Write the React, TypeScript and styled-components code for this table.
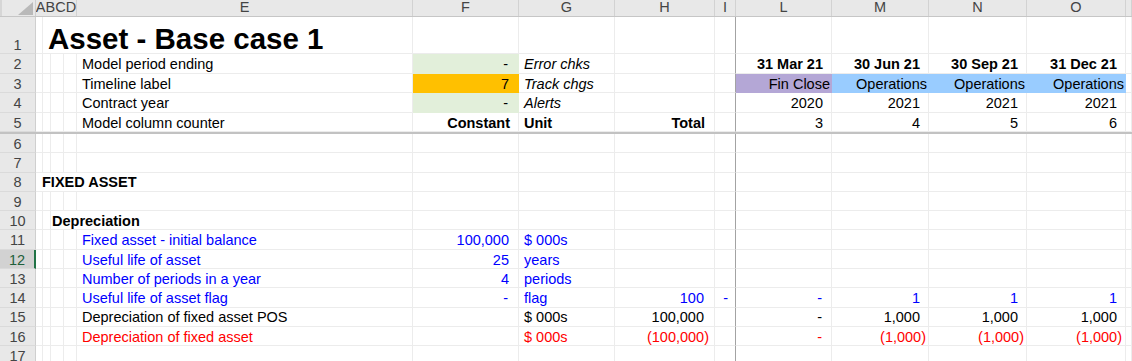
import React from 'react';
import styled, { createGlobalStyle } from 'styled-components';

type ColKey = 'A' | 'B' | 'C' | 'D' | 'E' | 'F' | 'G' | 'H' | 'I' | 'L' | 'M' | 'N' | 'O' | 'P';
type Tone = 'black' | 'blue' | 'red';
type Kind = 'text' | 'label' | 'num' | 'neg' | 'dash' | 'fill' | 'title';

interface CellSpec {
  col: ColKey;
  text: string;
  span?: number;
  kind?: Kind;
  tone?: Tone;
  bold?: boolean;
  italic?: boolean;
  fill?: string;
  pl?: number;
  pr?: number;
}

interface RowSpec {
  n: number;
  h: number;
  cells: CellSpec[];
}

const COLUMNS: { key: ColKey; w: string }[] = [
  { key: 'A', w: '7px' },
  { key: 'B', w: '8px' },
  { key: 'C', w: '13px' },
  { key: 'D', w: '13px' },
  { key: 'E', w: '336px' },
  { key: 'F', w: '106px' },
  { key: 'G', w: '96px' },
  { key: 'H', w: '100px' },
  { key: 'I', w: '21px' },
  { key: 'L', w: '96px' },
  { key: 'M', w: '97px' },
  { key: 'N', w: '98px' },
  { key: 'O', w: '99px' },
  { key: 'P', w: '1fr' },
];

const TEMPLATE = `36px ${COLUMNS.map((c) => c.w).join(' ')}`;

const TONES: Record<Tone, string> = {
  black: '#000000',
  blue: '#0000ff',
  red: '#ff0000',
};

const GREEN = '#e2efda';
const ORANGE = '#ffc000';
const PURPLE = '#b4a7d6';
const SKY = '#99ccff';

const GRID = '#ececec';
const HEAD_BG = '#e8e8e8';

const GlobalStyle = createGlobalStyle`
  html, body {
    margin: 0;
    padding: 0;
    background: #ffffff;
  }
  body {
    font-family: Arial, 'Liberation Sans', sans-serif;
    overflow: hidden;
  }
  * {
    box-sizing: border-box;
  }
`;

const Sheet = styled.div`
  width: 1132px;
  height: 361px;
  overflow: hidden;
  background: #ffffff;
  font-size: 14.5px;
`;

const Row = styled.div<{ $h: number }>`
  display: grid;
  grid-template-columns: ${TEMPLATE};
  height: ${(p) => p.$h}px;
`;

const HeaderRow = styled(Row)`
  border-bottom: 1px solid #c6c6c6;
`;

const Corner = styled.div`
  position: relative;
  background: ${HEAD_BG};
  border-right: 1px solid #cfcfcf;
  border-left: 2px solid #d6d6d6;

  > svg {
    position: absolute;
    right: 2px;
    bottom: 1px;
  }
`;

const ColHead = styled.div<{ $span?: number }>`
  grid-column: span ${(p) => p.$span ?? 1};
  display: flex;
  align-items: flex-end;
  justify-content: center;
  padding-bottom: 2px;
  background: ${HEAD_BG};
  border-right: 1px solid #d2d2d2;
  color: #444444;
  line-height: 1;
  white-space: nowrap;
  overflow: hidden;
`;

const RowHead = styled.div<{ $selected?: boolean }>`
  display: flex;
  align-items: flex-end;
  justify-content: center;
  padding-bottom: 1px;
  background: ${(p) => (p.$selected ? '#d2d2d2' : HEAD_BG)};
  color: ${(p) => (p.$selected ? '#1f5f3a' : '#444444')};
  border-right: ${(p) => (p.$selected ? '2px solid #217346' : '1px solid #cfcfcf')};
  border-bottom: 1px solid #dadada;
  line-height: 1;
`;

const Cell = styled.div<{
  $span: number;
  $right: boolean;
  $pl: number;
  $pr: number;
  $tone: Tone;
  $bold?: boolean;
  $italic?: boolean;
  $fill?: string;
  $freeze?: boolean;
  $title?: boolean;
}>`
  grid-column: span ${(p) => p.$span};
  display: flex;
  align-items: flex-end;
  justify-content: ${(p) => (p.$right ? 'flex-end' : 'flex-start')};
  padding: 0 ${(p) => p.$pr}px ${(p) => (p.$title ? 0 : 1)}px ${(p) => p.$pl}px;
  min-width: 0;
  white-space: nowrap;
  line-height: 1;
  font-size: ${(p) => (p.$title ? '29.5px' : '14.5px')};
  font-weight: ${(p) => (p.$bold || p.$title ? 700 : 400)};
  font-style: ${(p) => (p.$italic ? 'italic' : 'normal')};
  color: ${(p) => TONES[p.$tone]};
  background: ${(p) => p.$fill ?? 'transparent'};
  border-right: 1px solid ${(p) => (p.$freeze ? '#a3a3a3' : p.$fill ?? GRID)};
  border-bottom: 1px solid ${(p) => p.$fill ?? GRID};
`;

const FreezeBar = styled.div`
  height: 2px;
  background: #c2c2c2;
`;

const RIGHT_PAD: Record<Kind, number> = {
  text: 2,
  label: 2,
  num: 9,
  neg: 3,
  dash: 10,
  fill: 2,
  title: 0,
};

const dates = ['31 Mar 21', '30 Jun 21', '30 Sep 21', '31 Dec 21'];
const timeline: ColKey[] = ['L', 'M', 'N', 'O'];

const TOP_ROWS: RowSpec[] = [
  {
    n: 1,
    h: 37,
    cells: [{ col: 'B', span: 4, text: 'Asset - Base case 1', kind: 'title', pl: 5 }],
  },
  {
    n: 2,
    h: 19.5,
    cells: [
      { col: 'E', text: 'Model period ending', kind: 'label' },
      { col: 'F', text: '-', kind: 'dash', fill: GREEN },
      { col: 'G', text: 'Error chks', kind: 'label', italic: true },
      ...timeline.map((col, i) => ({ col, text: dates[i], kind: 'num' as Kind, bold: true, pr: 8 })),
    ],
  },
  {
    n: 3,
    h: 19.5,
    cells: [
      { col: 'E', text: 'Timeline label', kind: 'label' },
      { col: 'F', text: '7', kind: 'num', fill: ORANGE },
      { col: 'G', text: 'Track chgs', kind: 'label', italic: true },
      { col: 'L', text: 'Fin Close', kind: 'fill', fill: PURPLE, pr: 1 },
      { col: 'M', text: 'Operations', kind: 'fill', fill: SKY, pr: 1 },
      { col: 'N', text: 'Operations', kind: 'fill', fill: SKY, pr: 1 },
      { col: 'O', text: 'Operations', kind: 'fill', fill: SKY, pr: 1 },
    ],
  },
  {
    n: 4,
    h: 19.5,
    cells: [
      { col: 'E', text: 'Contract year', kind: 'label' },
      { col: 'F', text: '-', kind: 'dash', fill: GREEN },
      { col: 'G', text: 'Alerts', kind: 'label', italic: true },
      { col: 'L', text: '2020', kind: 'num', pr: 8 },
      { col: 'M', text: '2021', kind: 'num', pr: 8 },
      { col: 'N', text: '2021', kind: 'num', pr: 8 },
      { col: 'O', text: '2021', kind: 'num', pr: 8 },
    ],
  },
  {
    n: 5,
    h: 19.5,
    cells: [
      { col: 'E', text: 'Model column counter', kind: 'label' },
      { col: 'F', text: 'Constant', kind: 'num', bold: true, pr: 8 },
      { col: 'G', text: 'Unit', kind: 'label', bold: true },
      { col: 'H', text: 'Total', kind: 'num', bold: true },
      { col: 'L', text: '3', kind: 'num', pr: 8 },
      { col: 'M', text: '4', kind: 'num', pr: 8 },
      { col: 'N', text: '5', kind: 'num', pr: 8 },
      { col: 'O', text: '6', kind: 'num', pr: 8 },
    ],
  },
];

const RH = 19.3;

const BODY_ROWS: RowSpec[] = [
  { n: 6, h: RH, cells: [] },
  { n: 7, h: RH, cells: [] },
  { n: 8, h: RH, cells: [{ col: 'A', span: 5, text: 'FIXED ASSET', kind: 'label', bold: true, pl: 6 }] },
  { n: 9, h: RH, cells: [] },
  { n: 10, h: RH, cells: [{ col: 'C', span: 3, text: 'Depreciation', kind: 'label', bold: true, pl: 1 }] },
  {
    n: 11,
    h: RH,
    cells: [
      { col: 'E', text: 'Fixed asset - initial balance', kind: 'label', tone: 'blue' },
      { col: 'F', text: '100,000', kind: 'num', tone: 'blue' },
      { col: 'G', text: '$ 000s', kind: 'label', tone: 'blue' },
    ],
  },
  {
    n: 12,
    h: RH,
    cells: [
      { col: 'E', text: 'Useful life of asset', kind: 'label', tone: 'blue' },
      { col: 'F', text: '25', kind: 'num', tone: 'blue' },
      { col: 'G', text: 'years', kind: 'label', tone: 'blue' },
    ],
  },
  {
    n: 13,
    h: RH,
    cells: [
      { col: 'E', text: 'Number of periods in a year', kind: 'label', tone: 'blue' },
      { col: 'F', text: '4', kind: 'num', tone: 'blue' },
      { col: 'G', text: 'periods', kind: 'label', tone: 'blue' },
    ],
  },
  {
    n: 14,
    h: RH,
    cells: [
      { col: 'E', text: 'Useful life of asset flag', kind: 'label', tone: 'blue' },
      { col: 'F', text: '-', kind: 'dash', tone: 'blue' },
      { col: 'G', text: 'flag', kind: 'label', tone: 'blue' },
      { col: 'H', text: '100', kind: 'num', tone: 'blue', pr: 10 },
      { col: 'I', text: '-', kind: 'dash', tone: 'blue', pr: 7 },
      { col: 'L', text: '-', kind: 'dash', tone: 'blue', pr: 9 },
      { col: 'M', text: '1', kind: 'num', tone: 'blue', pr: 8 },
      { col: 'N', text: '1', kind: 'num', tone: 'blue', pr: 8 },
      { col: 'O', text: '1', kind: 'num', tone: 'blue', pr: 8 },
    ],
  },
  {
    n: 15,
    h: RH,
    cells: [
      { col: 'E', text: 'Depreciation of fixed asset POS', kind: 'label' },
      { col: 'G', text: '$ 000s', kind: 'label' },
      { col: 'H', text: '100,000', kind: 'num', pr: 10 },
      { col: 'L', text: '-', kind: 'dash', pr: 9 },
      { col: 'M', text: '1,000', kind: 'num', pr: 8 },
      { col: 'N', text: '1,000', kind: 'num', pr: 8 },
      { col: 'O', text: '1,000', kind: 'num', pr: 8 },
    ],
  },
  {
    n: 16,
    h: RH,
    cells: [
      { col: 'E', text: 'Depreciation of fixed asset', kind: 'label', tone: 'red' },
      { col: 'G', text: '$ 000s', kind: 'label', tone: 'red' },
      { col: 'H', text: '(100,000)', kind: 'neg', tone: 'red', pr: 5 },
      { col: 'L', text: '-', kind: 'dash', tone: 'red', pr: 9 },
      { col: 'M', text: '(1,000)', kind: 'neg', tone: 'red', pr: 2 },
      { col: 'N', text: '(1,000)', kind: 'neg', tone: 'red', pr: 2 },
      { col: 'O', text: '(1,000)', kind: 'neg', tone: 'red', pr: 3 },
    ],
  },
  { n: 17, h: RH, cells: [] },
];

const SELECTED_ROW = 12;

function SheetRow({ row }: { row: RowSpec }) {
  const out: React.ReactNode[] = [];
  let i = 0;
  while (i < COLUMNS.length) {
    const key = COLUMNS[i].key;
    const spec = row.cells.find((c) => c.col === key);
    const span = spec?.span ?? 1;
    const lastKey = COLUMNS[i + span - 1].key;
    const kind = spec?.kind ?? 'text';
    const right = kind !== 'label' && kind !== 'title';
    out.push(
      <Cell
        key={key}
        $span={span}
        $right={right}
        $pl={spec?.pl ?? (right ? 2 : 5)}
        $pr={spec?.pr ?? RIGHT_PAD[kind]}
        $tone={spec?.tone ?? 'black'}
        $bold={spec?.bold}
        $italic={spec?.italic}
        $fill={spec?.fill}
        $freeze={lastKey === 'I'}
        $title={kind === 'title'}
      >
        {spec?.text}
      </Cell>
    );
    i += span;
  }

  return (
    <Row $h={row.h}>
      <RowHead $selected={row.n === SELECTED_ROW}>{row.n}</RowHead>
      {out}
    </Row>
  );
}

function App() {
  return (
    <>
      <GlobalStyle />
      <Sheet>
        <HeaderRow $h={17}>
          <Corner>
            <svg width="15" height="13" viewBox="0 0 15 13">
              <polygon points="15,0 15,13 0,13" fill="#b9b9b9" />
            </svg>
          </Corner>
          <ColHead $span={4}>ABCD</ColHead>
          {['E', 'F', 'G', 'H', 'I', 'L', 'M', 'N', 'O', ''].map((label, i) => (
            <ColHead key={i}>{label}</ColHead>
          ))}
        </HeaderRow>

        {TOP_ROWS.map((row) => (
          <SheetRow key={row.n} row={row} />
        ))}

        <FreezeBar />

        {BODY_ROWS.map((row) => (
          <SheetRow key={row.n} row={row} />
        ))}
      </Sheet>
    </>
  );
}

export default App;
